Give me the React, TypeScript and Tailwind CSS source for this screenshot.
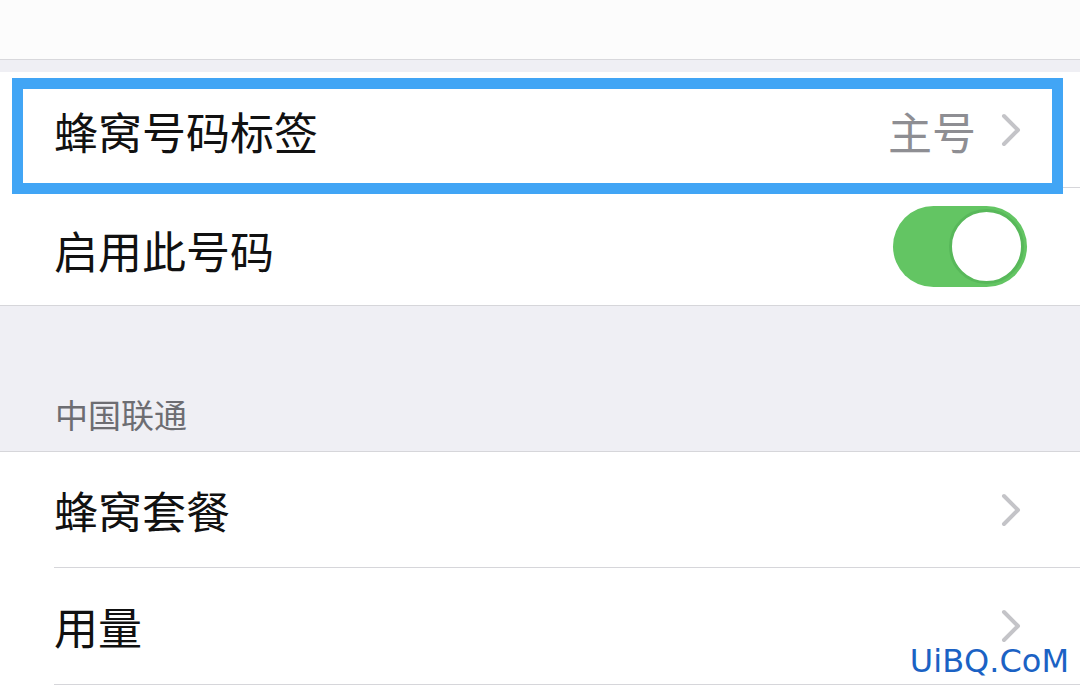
const CJK = '"Noto Sans CJK SC", "Noto Sans", sans-serif'

function Chevron() {
    return (
        <svg width="22" height="34" viewBox="0 0 22 34" className="shrink-0">
            <path d="M4 3 L18 17 L4 31" fill="none" stroke="#c4c4c8" strokeWidth="4" strokeLinecap="round" strokeLinejoin="round" />
        </svg>
    )
}

function Toggle() {
    return (
        <div className="w-[134px] h-[81px] rounded-full bg-[#63c563] flex items-center justify-end p-[3px]">
            <div className="w-[75px] h-[75px] rounded-full bg-white border-[3px] border-[#58b85a]" />
        </div>
    )
}

export default function App() {
    return (
        <div className="relative w-[1080px] h-[687px] overflow-hidden bg-white" style={{ fontFamily: CJK }}>
            {/* top nav area */}
            <div className="h-[59px] bg-[#fcfcfc]" />
            <div className="h-[13px] bg-[#efeff4] border-t border-[#d8d8dc]" />

            {/* first group */}
            <div className="relative bg-white">
                <div className="h-[115px] flex items-center pl-[54px] pr-[58px]">
                    <span className="text-[44px] leading-none text-[#111] flex-1 pt-[3px]">蜂窝号码标签</span>
                    <span className="text-[44px] leading-none text-[#8e8e93] mr-[24px] pt-[3px]">主号</span>
                    <Chevron />
                </div>
                <div className="h-px bg-[#d6d6da] ml-[54px]" />
                <div className="h-[117px] flex items-center pl-[54px] pr-[53px]">
                    <span className="text-[44px] leading-none text-[#111] flex-1 pt-[6px]">启用此号码</span>
                    <Toggle />
                </div>
                {/* highlight frame */}
                <div className="absolute left-[12px] top-[6px] w-[1051px] h-[116px] border-[11px] border-[#41a5f5]" />
            </div>
            <div className="h-px bg-[#d6d6da]" />

            {/* section header */}
            <div className="h-[145px] bg-[#efeff4] flex items-end pl-[55px] pb-[20px]">
                <span className="text-[33px] leading-none text-[#6d6d72]">中国联通</span>
            </div>
            <div className="h-px bg-[#d6d6da]" />

            {/* second group */}
            <div className="bg-white">
                <div className="h-[115px] flex items-center pl-[54px] pr-[58px]">
                    <span className="text-[44px] leading-none text-[#111] flex-1">蜂窝套餐</span>
                    <Chevron />
                </div>
                <div className="h-px bg-[#d6d6da] ml-[54px]" />
                <div className="h-[116px] flex items-center pl-[54px] pr-[58px]">
                    <span className="text-[44px] leading-none text-[#111] flex-1">用量</span>
                    <Chevron />
                </div>
                <div className="h-px bg-[#d6d6da] ml-[54px]" />
            </div>

            {/* watermark */}
            <span
                className="absolute right-[11px] bottom-[10px] text-[32px] leading-none text-[#1b62c4]"
                style={{ fontFamily: '"DejaVu Sans", sans-serif' }}
            >
                UiBQ.CoM
            </span>
        </div>
    )
}
